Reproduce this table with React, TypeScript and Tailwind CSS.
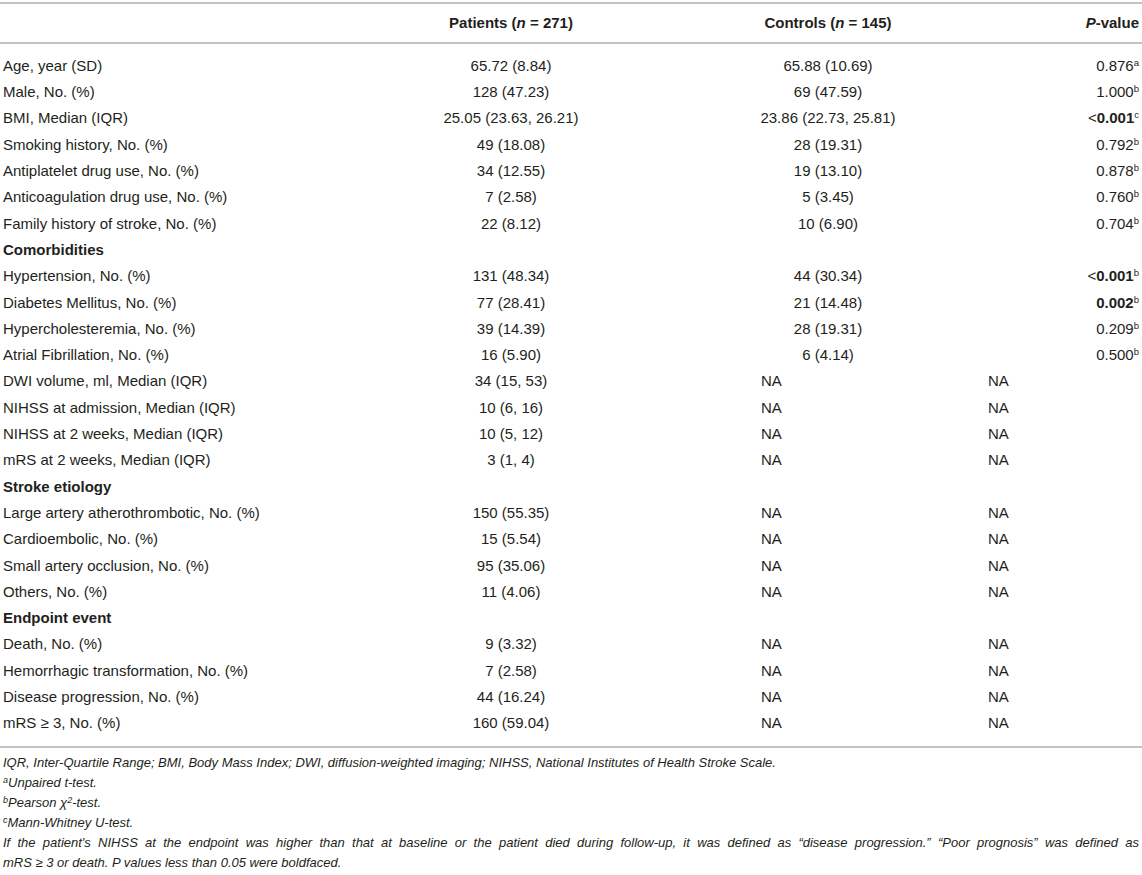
import React from 'react';

type Row =
    | { kind: 'section'; label: string }
    | { kind: 'data'; label: string; patients: string; controls: string; p: string; sup?: string; bold?: boolean; lt?: boolean };

const rows: Row[] = [
    { kind: 'data', label: 'Age, year (SD)', patients: '65.72 (8.84)', controls: '65.88 (10.69)', p: '0.876', sup: 'a' },
    { kind: 'data', label: 'Male, No. (%)', patients: '128 (47.23)', controls: '69 (47.59)', p: '1.000', sup: 'b' },
    { kind: 'data', label: 'BMI, Median (IQR)', patients: '25.05 (23.63, 26.21)', controls: '23.86 (22.73, 25.81)', p: '0.001', sup: 'c', bold: true, lt: true },
    { kind: 'data', label: 'Smoking history, No. (%)', patients: '49 (18.08)', controls: '28 (19.31)', p: '0.792', sup: 'b' },
    { kind: 'data', label: 'Antiplatelet drug use, No. (%)', patients: '34 (12.55)', controls: '19 (13.10)', p: '0.878', sup: 'b' },
    { kind: 'data', label: 'Anticoagulation drug use, No. (%)', patients: '7 (2.58)', controls: '5 (3.45)', p: '0.760', sup: 'b' },
    { kind: 'data', label: 'Family history of stroke, No. (%)', patients: '22 (8.12)', controls: '10 (6.90)', p: '0.704', sup: 'b' },
    { kind: 'section', label: 'Comorbidities' },
    { kind: 'data', label: 'Hypertension, No. (%)', patients: '131 (48.34)', controls: '44 (30.34)', p: '0.001', sup: 'b', bold: true, lt: true },
    { kind: 'data', label: 'Diabetes Mellitus, No. (%)', patients: '77 (28.41)', controls: '21 (14.48)', p: '0.002', sup: 'b', bold: true },
    { kind: 'data', label: 'Hypercholesteremia, No. (%)', patients: '39 (14.39)', controls: '28 (19.31)', p: '0.209', sup: 'b' },
    { kind: 'data', label: 'Atrial Fibrillation, No. (%)', patients: '16 (5.90)', controls: '6 (4.14)', p: '0.500', sup: 'b' },
    { kind: 'data', label: 'DWI volume, ml, Median (IQR)', patients: '34 (15, 53)', controls: 'NA', p: 'NA' },
    { kind: 'data', label: 'NIHSS at admission, Median (IQR)', patients: '10 (6, 16)', controls: 'NA', p: 'NA' },
    { kind: 'data', label: 'NIHSS at 2 weeks, Median (IQR)', patients: '10 (5, 12)', controls: 'NA', p: 'NA' },
    { kind: 'data', label: 'mRS at 2 weeks, Median (IQR)', patients: '3 (1, 4)', controls: 'NA', p: 'NA' },
    { kind: 'section', label: 'Stroke etiology' },
    { kind: 'data', label: 'Large artery atherothrombotic, No. (%)', patients: '150 (55.35)', controls: 'NA', p: 'NA' },
    { kind: 'data', label: 'Cardioembolic, No. (%)', patients: '15 (5.54)', controls: 'NA', p: 'NA' },
    { kind: 'data', label: 'Small artery occlusion, No. (%)', patients: '95 (35.06)', controls: 'NA', p: 'NA' },
    { kind: 'data', label: 'Others, No. (%)', patients: '11 (4.06)', controls: 'NA', p: 'NA' },
    { kind: 'section', label: 'Endpoint event' },
    { kind: 'data', label: 'Death, No. (%)', patients: '9 (3.32)', controls: 'NA', p: 'NA' },
    { kind: 'data', label: 'Hemorrhagic transformation, No. (%)', patients: '7 (2.58)', controls: 'NA', p: 'NA' },
    { kind: 'data', label: 'Disease progression, No. (%)', patients: '44 (16.24)', controls: 'NA', p: 'NA' },
    { kind: 'data', label: 'mRS \u2265 3, No. (%)', patients: '160 (59.04)', controls: 'NA', p: 'NA' },
];

const Sup: React.FC<{ children: React.ReactNode }> = ({ children }) => (
    <sup className="text-[9.5px] font-normal top-[-5px]">{children}</sup>
);

export default function App() {
    return (
        <div className="w-[1142px] h-[875px] bg-white text-[#231f20] overflow-hidden" style={{ fontFamily: '"Liberation Sans", Arial, sans-serif' }}>
            <table className="w-full table-fixed border-collapse mt-[2px] text-[15px]">
                <colgroup>
                    <col className="w-[380px]" />
                    <col className="w-[262px]" />
                    <col className="w-[318px]" />
                    <col className="w-[182px]" />
                </colgroup>
                <thead>
                    <tr className="h-[40px] border-t-2 border-b-2 border-[#c2c2c2] font-bold">
                        <th className="pl-[3px]"></th>
                        <th className="text-center font-bold">Patients (<i>n</i> = 271)</th>
                        <th className="text-center pl-[54px] font-bold">Controls (<i>n</i> = 145)</th>
                        <th className="text-right pr-[3px] font-bold"><i>P</i>-value</th>
                    </tr>
                </thead>
                <tbody className="border-b-2 border-[#c2c2c2]">
                    <tr className="h-[10px]"><td colSpan={4}></td></tr>
                    {rows.map((r, i) =>
                        r.kind === 'section' ? (
                            <tr key={i} className="h-[26.3px]">
                                <td colSpan={4} className="pl-[3px] font-bold">{r.label}</td>
                            </tr>
                        ) : (
                            <tr key={i} className="h-[26.3px]">
                                <td className="pl-[3px] whitespace-nowrap">{r.label}</td>
                                <td className="text-center whitespace-nowrap">{r.patients}</td>
                                {r.controls === 'NA' ? (
                                    <td className="text-left pl-[119px]">NA</td>
                                ) : (
                                    <td className="text-center pl-[54px] whitespace-nowrap">{r.controls}</td>
                                )}
                                {r.p === 'NA' ? (
                                    <td className="text-left pl-[28px]">NA</td>
                                ) : (
                                    <td className="text-right pr-[3px] whitespace-nowrap">
                                        {r.lt && <span>&lt;</span>}
                                        <span className={r.bold ? 'font-bold' : ''}>{r.p}</span>
                                        {r.sup && <Sup>{r.sup}</Sup>}
                                    </td>
                                )}
                            </tr>
                        )
                    )}
                    <tr className="h-[10px]"><td colSpan={4}></td></tr>
                </tbody>
            </table>
            <div className="mt-[5px] px-[3px] italic text-[13px] leading-[20px]">
                <p>IQR, Inter-Quartile Range; BMI, Body Mass Index; DWI, diffusion-weighted imaging; NIHSS, National Institutes of Health Stroke Scale.</p>
                <p><sup className="text-[9px] top-[-4px]">a</sup>Unpaired t-test.</p>
                <p><sup className="text-[9px] top-[-4px]">b</sup>Pearson χ<sup className="text-[9px] top-[-4px]">2</sup>-test.</p>
                <p><sup className="text-[9px] top-[-4px]">c</sup>Mann-Whitney U-test.</p>
                <p className="text-justify [text-align-last:justify]">
                    If the patient's NIHSS at the endpoint was higher than that at baseline or the patient died during follow-up, it was defined as “disease progression.” “Poor prognosis” was defined as
                </p>
                <p>mRS ≥ 3 or death. P values less than 0.05 were boldfaced.</p>
            </div>
        </div>
    );
}
